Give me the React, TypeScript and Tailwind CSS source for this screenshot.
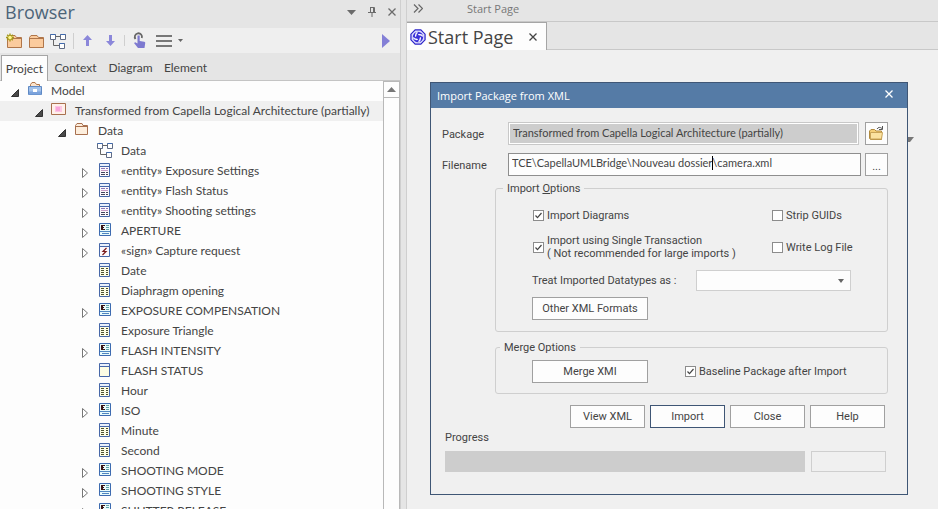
import React from "react";

type Kind =
  | "model"
  | "view"
  | "folder"
  | "diagram"
  | "entity"
  | "enum"
  | "signal"
  | "datatype"
  | "primitive";

type Row = { label: string; kind: Kind; level: number; state?: "open" | "closed"; selected?: boolean };

const rows: Row[] = [
  { label: "Model", kind: "model", level: 0, state: "open" },
  { label: "Transformed from Capella Logical Architecture (partially)", kind: "view", level: 1, state: "open", selected: true },
  { label: "Data", kind: "folder", level: 2, state: "open" },
  { label: "Data", kind: "diagram", level: 3 },
  { label: "«entity» Exposure Settings", kind: "entity", level: 3, state: "closed" },
  { label: "«entity» Flash Status", kind: "entity", level: 3, state: "closed" },
  { label: "«entity» Shooting settings", kind: "entity", level: 3, state: "closed" },
  { label: "APERTURE", kind: "enum", level: 3, state: "closed" },
  { label: "«sign» Capture request", kind: "signal", level: 3, state: "closed" },
  { label: "Date", kind: "datatype", level: 3 },
  { label: "Diaphragm opening", kind: "datatype", level: 3 },
  { label: "EXPOSURE COMPENSATION", kind: "enum", level: 3, state: "closed" },
  { label: "Exposure Triangle", kind: "datatype", level: 3 },
  { label: "FLASH INTENSITY", kind: "enum", level: 3, state: "closed" },
  { label: "FLASH STATUS", kind: "primitive", level: 3 },
  { label: "Hour", kind: "datatype", level: 3 },
  { label: "ISO", kind: "enum", level: 3, state: "closed" },
  { label: "Minute", kind: "datatype", level: 3 },
  { label: "Second", kind: "datatype", level: 3 },
  { label: "SHOOTING MODE", kind: "enum", level: 3, state: "closed" },
  { label: "SHOOTING STYLE", kind: "enum", level: 3, state: "closed" },
  { label: "SHUTTER RELEASE", kind: "enum", level: 3, state: "closed" },
];

const indents = ["pl-2", "pl-8", "pl-[55px]", "pl-[78px]"];

function DiagramGlyph() {
  return (
    <svg width="16" height="16" viewBox="0 0 16 16" fill="none" aria-hidden="true">
      <path d="M3.500 6.500v6h6M6 3.500h4" stroke="#666" />
      <path d="M.5 1.500h5v5h-5zM10.500 1.500h5v5h-5zM9.500 10.500h5v5h-5z" fill="#fff" stroke="#5f6b85" />
      <path d="M.5 1.500h5M10.500 1.500h5M9.500 10.500h5" stroke="#3f6ab0" />
    </svg>
  );
}

function NodeIcon({ kind }: { kind: Kind }) {
  if (kind === "diagram") return <DiagramGlyph />;
  if (kind === "model")
    return (
      <svg width="16" height="16" viewBox="0 0 16 16" fill="none" aria-hidden="true">
        <path d="M3.500 5V2.500L5 .5h3l1.500 2h3V5" fill="#fbe3cb" stroke="#b0764a" />
        <path d="M1.500 4.500h13v8h-13z" fill="#a3c2ea" stroke="#5f89c4" />
        <path d="M2 9.500h12v3H2z" fill="#7ba3dc" />
        <path d="M6 7h4v3H6z" fill="#fff" />
      </svg>
    );
  if (kind === "view")
    return (
      <svg width="16" height="16" viewBox="0 0 16 16" fill="none" aria-hidden="true">
        <path d="M.5 1.500h14v11H.5z" fill="#fff0ea" stroke="#a8704f" />
        <path d="M4 4h7v6H4z" fill="#fcc6e4" />
        <path d="M5 5h4v4H5z" fill="#f9a6da" />
      </svg>
    );
  if (kind === "folder")
    return (
      <svg width="16" height="16" viewBox="0 0 16 16" fill="none" aria-hidden="true">
        <path d="M1.500 12.500v-9l1.500-2h5l1 2h4.500v9z" fill="#fdeedd" stroke="#a8704f" />
        <path d="M1.500 4.500h12" stroke="#a8704f" />
      </svg>
    );
  if (kind === "enum")
    return (
      <svg width="16" height="16" viewBox="0 0 16 16" fill="none" aria-hidden="true">
        <path d="M2.500 1.500h11v12h-11z" fill="#e9fbfb" stroke="#3d6bb0" />
        <path d="M3 9.500h10M5 11.500h7" stroke="#4f86c0" />
        <path d="M4 3h2v5H4zM6 3h2v1H6zM6 5h1v1H6zM6 7h2v1H6z" fill="#3a1414" />
        <path d="M9 3.500h3M9 5.500h3M9 7.500h3" stroke="#5fa3a8" />
      </svg>
    );
  return (
    <svg width="16" height="16" viewBox="0 0 16 16" fill="none" aria-hidden="true">
      <path
        d="M2.500 1.500h10v13h-10z"
        fill={kind === "datatype" || kind === "primitive" ? "#fdfde4" : "#fdf8fc"}
        stroke="#4667a8"
      />
      <path d="M3 2h9v2H3z" fill="#eaf1fb" />
      <path d="M2.500 4.500h10" stroke="#4667a8" />
      {kind === "entity" && (
        <>
          <path d="M4 6.500h4M9 6.500h2" stroke="#8a78b4" />
          <path d="M4 8.500h7" stroke="#c99bc4" />
          <path d="M4 10.500h4M9 10.500h2M4 12.500h4M9 12.500h2" stroke="#44465c" />
        </>
      )}
      {kind === "datatype" && (
        <path d="M4 6.500h3M9 6.500h2M4 8.500h3M9 8.500h2M4 10.500h3M9 10.500h2M4 12.500h3M9 12.500h2" stroke="#4e5230" />
      )}
      {kind === "signal" && <path d="M9.500 6L6 9.500h3L5.500 13" stroke="#7a1c1c" strokeWidth="1.200" />}
    </svg>
  );
}

function Twisty({ state }: { state?: "open" | "closed" }) {
  return (
    <svg className="mt-1 shrink-0" width="12" height="12" viewBox="0 0 12 12" aria-hidden="true">
      {state === "open" && <path d="M3.500 9.500h7v-7z" fill="#4a4a4a" stroke="#333" />}
      {state === "closed" && <path d="M4.500 1.500v9L9.500 6z" fill="#fff" stroke="#777" />}
    </svg>
  );
}

function CloseGlyph({ size }: { size: number }) {
  return (
    <svg width={size} height={size} viewBox="0 0 8 8" aria-hidden="true">
      <path d="M.5.5l7 7M7.500.5l-7 7" stroke="currentColor" strokeWidth="1.300" fill="none" />
    </svg>
  );
}

function ToolFolder({ fresh }: { fresh?: boolean }) {
  return (
    <svg width="16" height="16" viewBox="0 0 16 16" fill="none" aria-hidden="true">
      <path d="M1.500 14.500v-10l1.500-2h6l1.500 2h5v10z" fill="#fbcb9d" stroke="#b0764a" />
      <path d="M1.500 5.500h14" stroke="#b0764a" />
      {fresh && (
        <>
          <path d="M4 .5v8M0 4.500h8M1.200 1.700l5.600 5.600M6.800 1.700L1.200 7.300" stroke="#a39a18" strokeWidth="1.400" />
          <circle cx="4" cy="4.500" r="1.800" fill="#fff68a" />
        </>
      )}
    </svg>
  );
}

function Check({ label, checked }: { label: React.ReactNode; checked?: boolean }) {
  return (
    <label className="flex items-center gap-[3px]">
      <span className="grid size-[11px] shrink-0">
        <input
          type="checkbox"
          defaultChecked={checked}
          className="peer col-start-1 row-start-1 size-[11px] appearance-none border border-[#8c8c8c] bg-white"
        />
        <svg
          className="pointer-events-none col-start-1 row-start-1 opacity-0 peer-checked:opacity-100"
          width="11"
          height="11"
          viewBox="0 0 11 11"
          aria-hidden="true"
        >
          <path d="M2.500 5.500l2 2.200 4-4.700" fill="none" stroke="#444" strokeWidth="1.200" />
        </svg>
      </span>
      <span className="whitespace-nowrap">{label}</span>
    </label>
  );
}

function PushButton({ children, className }: { children: React.ReactNode; className: string }) {
  return (
    <button type="button" className={`h-[23px] border bg-[#fdfdfd] text-center ${className}`}>
      {children}
    </button>
  );
}

function BrowserPanel() {
  return (
    <aside className="flex w-[401px] shrink-0 flex-col border-r border-[#cfcfcf]">
      <header className="flex h-7 items-center justify-between pr-1 pb-1 pl-[5px] font-['Open_Sans',sans-serif] text-[#6b6b6b]">
        <h1 className="text-[18px] text-[#4c6478]">Browser</h1>
        <div className="flex items-center gap-3">
          <button type="button" aria-label="Panel menu">
            <svg width="9" height="5" viewBox="0 0 9 5" aria-hidden="true">
              <path d="M0 0h9L4.500 5z" fill="currentColor" />
            </svg>
          </button>
          <button type="button" aria-label="Pin panel">
            <svg width="8" height="10" viewBox="0 0 8 10" aria-hidden="true">
              <path d="M2 .5h4.500V5.500M2.500 .5v5M5.500 1v4.500M0 5.500h8M4 6v4" fill="none" stroke="currentColor" />
            </svg>
          </button>
          <button type="button" aria-label="Close panel">
            <CloseGlyph size={8} />
          </button>
        </div>
      </header>

      <div className="flex h-[25px] items-center bg-[#efefef] pr-2.5 pl-1.5">
        <div className="flex items-center gap-1.5 border-r border-[#cfcfcf] pr-[7px]">
          <button type="button" aria-label="New package"><ToolFolder fresh /></button>
          <button type="button" aria-label="Open package"><ToolFolder /></button>
          <button type="button" aria-label="New diagram"><DiagramGlyph /></button>
        </div>
        <div className="flex items-center gap-3.5 border-r border-[#cfcfcf] px-[9px]">
          <button type="button" aria-label="Move up">
            <svg width="9" height="11" viewBox="0 0 9 11" aria-hidden="true">
              <path d="M4.500 0L9 5H6v6H3V5H0z" fill="#8b87da" />
            </svg>
          </button>
          <button type="button" aria-label="Move down">
            <svg width="9" height="11" viewBox="0 0 9 11" aria-hidden="true">
              <path d="M4.500 11L9 6H6V0H3v6H0z" fill="#8b87da" />
            </svg>
          </button>
        </div>
        <div className="flex items-center gap-2.5 pl-2">
          <button type="button" aria-label="Interaction">
            <svg width="13" height="17" viewBox="0 0 13 17" aria-hidden="true">
              <path d="M2.500 7A3.600 3.600 0 1 1 8.800 6" fill="none" stroke="#666" strokeWidth="1.800" />
              <path d="M4.500 3.500h2.200V9l4.500.8c.8.2 1.200.7 1 1.500L11.500 16H5L1 11l1.200-.8 2.300 1.300z" fill="#7d79d0" />
            </svg>
          </button>
          <button type="button" aria-label="Options" className="flex items-center gap-1.5">
            <svg width="16" height="12" viewBox="0 0 16 12" aria-hidden="true">
              <path d="M0 0h16v2H0zM0 5h16v2H0zM0 10h16v2H0z" fill="#777" />
            </svg>
            <svg width="5" height="3" viewBox="0 0 5 3" aria-hidden="true">
              <path d="M0 0h5L2.500 3z" fill="#666" />
            </svg>
          </button>
        </div>
        <button type="button" aria-label="Next" className="ml-auto">
          <svg width="8" height="14" viewBox="0 0 8 14" aria-hidden="true">
            <path d="M0 0l8 7-8 7z" fill="#837fd6" />
          </svg>
        </button>
      </div>

      <nav className="flex h-7 border-b border-[#c4c4c4] pl-px">
        <button type="button" className="mt-[2px] -mb-px w-[47px] border border-b-0 border-[#a5a5a5] bg-[#fdfdfd]">Project</button>
        <button type="button" className="w-[55px] pt-0.5">Context</button>
        <button type="button" className="w-[55px] pt-0.5">Diagram</button>
        <button type="button" className="w-[55px] pt-0.5">Element</button>
      </nav>

      <div className="flex min-h-0 flex-1 bg-[#fdfdfd]">
        <ul className="min-w-0 flex-1 overflow-hidden">
          {rows.map((row, i) => (
            <li
              key={i}
              className={`flex h-5 items-center whitespace-nowrap ${indents[row.level]} ${row.selected ? "bg-[#f0f0f0]" : ""}`}
            >
              <Twisty state={row.state} />
              <span className="mr-2 ml-[7px] shrink-0 pb-[3px]">
                <NodeIcon kind={row.kind} />
              </span>
              <span>{row.label}</span>
            </li>
          ))}
        </ul>
        <div className="w-[17px] border border-b-0 border-[#b8b8b8]">
          <button type="button" aria-label="Scroll up" className="flex h-4 w-full items-center justify-center border-b border-[#b8b8b8]">
            <svg width="9" height="5" viewBox="0 0 9 5" aria-hidden="true">
              <path d="M0 5h9L4.500 0z" fill="#777" />
            </svg>
          </button>
        </div>
      </div>
    </aside>
  );
}

function ImportDialog() {
  return (
    <section
      role="dialog"
      aria-label="Import Package from XML"
      className="relative mt-8 mr-[30px] ml-[23px] border border-[#3f5675] bg-[#f0f0f0]"
    >
      <header className="flex h-[25px] items-center justify-between bg-[#557ba6] pr-3.5 pl-1.5 font-['Open_Sans',sans-serif] text-[11px] text-white">
        <h2>Import Package from XML</h2>
        <button type="button" aria-label="Close dialog" className="pb-1"><CloseGlyph size={8} /></button>
      </header>

      <form className="pt-[14px] pr-[19px] pb-[22px] pl-[11px] font-[Roboto,sans-serif] text-[11px] leading-[13px]">
        <div className="flex h-[23px] items-center">
          <label htmlFor="package" className="w-[66px] pt-0.5">Package</label>
          <input
            id="package"
            readOnly
            defaultValue="Transformed from Capella Logical Architecture (partially)"
            className="mr-1.5 h-full min-w-0 flex-1 border border-[#c8c8c8] bg-[#cdcdcd] pb-0.5 pl-1 font-[Lato,sans-serif] ring-1 ring-white ring-inset"
          />
          <button type="button" aria-label="Select package" className="flex size-[23px] items-center justify-center border border-[#a0a0a0] bg-[#fdfdfd]">
            <svg width="15" height="15" viewBox="0 0 15 15" fill="none" aria-hidden="true">
              <path d="M.5 12.500V5L2 3.500h3.500L7 5h5.500v8.500h-11z" fill="#f5cf78" stroke="#b08a3e" />
              <path d="M1.500 13V6.500H13.500L12.500 13z" fill="#fbe2a0" stroke="#c9a458" />
              <path d="M8 3c1-2 3.500-2 5-.5M13.500 0v3.500H10" stroke="#555" />
            </svg>
          </button>
        </div>
        <div className="mt-2 flex h-[23px] items-center">
          <label htmlFor="filename" className="w-[66px] pt-0.5">Filename</label>
          <div className="relative mr-1 h-full flex-1">
            <input
              id="filename"
              defaultValue="TCE\CapellaUMLBridge\Nouveau dossier\camera.xml"
              className="h-full w-full border border-[#8e8e8e] bg-[#fdfdfd] pb-1 pl-[3px] font-[Lato,sans-serif]"
            />
            <span className="absolute top-[3px] left-[204px] h-3.5 w-px bg-black" />
          </div>
          <button type="button" aria-label="Browse for file" className="size-[23px] border border-[#a0a0a0] bg-[#fdfdfd] pt-1">...</button>
        </div>

        <fieldset className="mt-1.5 ml-[53px] min-w-0 rounded-[3px] border border-[#cfcfcf] pr-9 pb-[11px] pl-9">
          <legend className="-ml-[29px] px-1">Import <span className="underline">O</span>ptions</legend>
          <div className="grid grid-cols-[239px_1fr] items-center gap-y-3 pt-[14px] pl-px">
            <Check label="Import Diagrams" checked />
            <Check label="Strip GUIDs" />
            <Check label={<>Import using Single Transaction<br />( Not recommended for large imports )</>} checked />
            <Check label="Write Log File" />
          </div>
          <div className="mt-[10px] flex items-center">
            <label htmlFor="datatypes" className="w-[164px]">Treat Imported Datatypes as :</label>
            <div className="grid flex-1 items-center">
              <select id="datatypes" className="col-start-1 row-start-1 h-[21px] w-full appearance-none border border-[#cfcfcf] bg-[#fdfdfd]" />
              <svg className="pointer-events-none col-start-1 row-start-1 mr-[7px] justify-self-end" width="6" height="4" viewBox="0 0 6 4" aria-hidden="true">
                <path d="M0 0h6L3 4z" fill="#666" />
              </svg>
            </div>
          </div>
          <PushButton className="mt-1.5 block w-[116px] border-[#a0a0a0]">Other XML Formats</PushButton>
        </fieldset>

        <fieldset className="mt-[9px] ml-[53px] min-w-0 rounded-[3px] border border-[#cfcfcf] pr-9 pb-2.5 pl-9">
          <legend className="-ml-8 px-1">Merge Options</legend>
          <div className="flex items-center gap-[37px] pt-[6px]">
            <PushButton className="w-[116px] border-[#a0a0a0]">Merge XMI</PushButton>
            <Check label="Baseline Package after Import" checked />
          </div>
        </fieldset>

        <div className="mt-[11px] mr-[3px] flex justify-end gap-[5px]">
          <PushButton className="w-[75px] border-[#a0a0a0]">View XML</PushButton>
          <PushButton className="w-[75px] border-[#3f5675]">Import</PushButton>
          <PushButton className="w-[75px] border-[#a0a0a0]">Close</PushButton>
          <PushButton className="w-[75px] border-[#a0a0a0]">Help</PushButton>
        </div>
        <div className="mt-[3px] ml-[3px]">Progress</div>
        <div className="mt-[7px] mr-0.5 ml-[3px] flex h-[21px] gap-1.5">
          <div role="progressbar" aria-label="Progress" className="flex-1 bg-[#cdcdcd]" />
          <div className="w-[75px] border border-[#cfcfcf]" />
        </div>
      </form>
      <svg className="absolute top-[54px] -right-[7px]" width="6" height="5" viewBox="0 0 6 5" aria-hidden="true">
        <path d="M0 0h6L2 5H0z" fill="#777" />
      </svg>
    </section>
  );
}

export default function App() {
  return (
    <div className="flex h-screen overflow-hidden bg-[#e5e5e5] font-[Lato,sans-serif] text-[12px] leading-4 text-[#444]">
      <BrowserPanel />
      <main className="ml-[5px] min-w-0 flex-1 border-l border-[#cfcfcf] bg-[#f0f0f0]">
        <div className="flex h-[22px] items-center border-b border-[#c8c8c8] bg-[#e5e5e5] pb-1 pl-1.5 font-['Open_Sans',sans-serif] text-[11px] text-[#777]">
          <button type="button" aria-label="Show more">
            <svg width="10" height="9" viewBox="0 0 10 9" aria-hidden="true">
              <path d="M1 .5l4 4-4 4M5.500.5l4 4-4 4" fill="none" stroke="#666" strokeWidth="1.200" />
            </svg>
          </button>
          <span className="ml-11">Start Page</span>
        </div>
        <div className="flex h-7 border-b border-[#c8c8c8] bg-[#e5e5e5]">
          <div className="-mb-px flex w-[140px] items-center border-t border-r border-[#a5a5a5] bg-[#fdfdfd] pl-[3px] font-['Open_Sans',sans-serif]">
            <svg width="16" height="16" viewBox="0 0 17 17" aria-hidden="true">
              <path d="M5.500 1h6L16 5.500v6L11.500 16h-6L1 11.500v-6z" fill="#dddcfd" stroke="#2a22c8" strokeWidth="1.300" />
              <circle cx="8.500" cy="8.500" r="5.500" fill="#3a31d8" />
              <path d="M8 3.500c-3 1.500-1 3.500-2.500 4.500M13.500 8c-1.500-3-3.500-1-4.500-2.500M9 13.500c3-1.500 1-3.500 2.500-4.500M3.500 9c1.500 3 3.500 1 4.500 2.500" fill="none" stroke="#fff" strokeWidth="1.500" />
            </svg>
            <button type="button" className="ml-0.5 text-[18px]">Start Page</button>
            <button type="button" aria-label="Close tab" className="mr-[9px] ml-auto"><CloseGlyph size={8} /></button>
          </div>
        </div>
        <ImportDialog />
      </main>
    </div>
  );
}
